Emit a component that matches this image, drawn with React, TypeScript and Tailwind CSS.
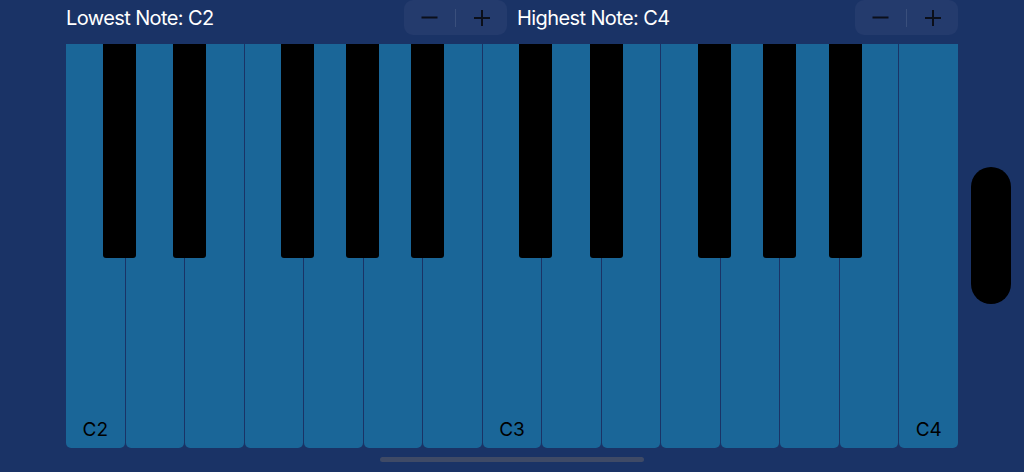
// white keys C2..C4, label only on the Cs
const whiteKeys = ["C2", "", "", "", "", "", "", "C3", "", "", "", "", "", "", "C4"];

// left offsets of the black keys inside the keyboard, in px
const blackKeys = [
  "left-[37px]",
  "left-[107px]",
  "left-[215px]",
  "left-[280px]",
  "left-[345px]",
  "left-[453px]",
  "left-[524px]",
  "left-[632px]",
  "left-[697px]",
  "left-[763px]",
];

function Stepper() {
  return (
    <div className="flex h-[35px] w-[103px] shrink-0 items-center rounded-[9px] bg-[#243b6d]">
      <button className="flex flex-1 items-center justify-center text-[#0b0f1a]">
        <svg width="17" height="17" viewBox="0 0 17 17">
          <line x1="0.5" y1="8.5" x2="16.5" y2="8.5" stroke="currentColor" strokeWidth="2" />
        </svg>
      </button>
      <div className="h-[18px] w-px bg-[#3a4f7c]" />
      <button className="flex flex-1 items-center justify-center text-[#0b0f1a]">
        <svg width="16" height="16" viewBox="0 0 16 16">
          <line x1="0" y1="8" x2="16" y2="8" stroke="currentColor" strokeWidth="2" />
          <line x1="8" y1="0" x2="8" y2="16" stroke="currentColor" strokeWidth="2" />
        </svg>
      </button>
    </div>
  );
}

function NoteControl({ label }: { label: string }) {
  return (
    <div className="flex flex-1 items-center">
      <span className="flex-1 text-[20px] leading-none tracking-[-0.6px] text-white">{label}</span>
      <Stepper />
    </div>
  );
}

export default function App() {
  return (
    <div
      className="flex h-[472px] w-full overflow-hidden bg-[#1a3366]"
      style={{ fontFamily: "Inter, 'Noto Sans', sans-serif" }}
    >
      <div className="ml-[66px] flex w-[892px] flex-col">
        {/* Top controls */}
        <div className="flex h-[35px] gap-[10px]">
          <NoteControl label="Lowest Note: C2" />
          <NoteControl label="Highest Note: C4" />
        </div>

        {/* Keyboard */}
        <div className="relative mt-[9px] flex h-[404px] gap-px">
          {whiteKeys.map((note, i) => (
            <div
              key={i}
              className="flex flex-1 items-end justify-center rounded-b-[5px] bg-[#1a6698] pb-[9px]"
            >
              <span className="text-[19px] leading-none text-black">{note}</span>
            </div>
          ))}
          {blackKeys.map((pos, i) => (
            <div
              key={i}
              className={`absolute top-0 h-[214px] w-[33px] rounded-b-[3px] bg-black ${pos}`}
            />
          ))}
        </div>

        {/* Home indicator */}
        <div className="mt-[9px] flex justify-center">
          <div className="h-[5px] w-[264px] rounded-full bg-[#3f4a66]" />
        </div>
      </div>

      {/* Right side pill */}
      <div className="ml-[13px] mt-[167px] h-[137px] w-[40px] rounded-full bg-black" />
    </div>
  );
}
